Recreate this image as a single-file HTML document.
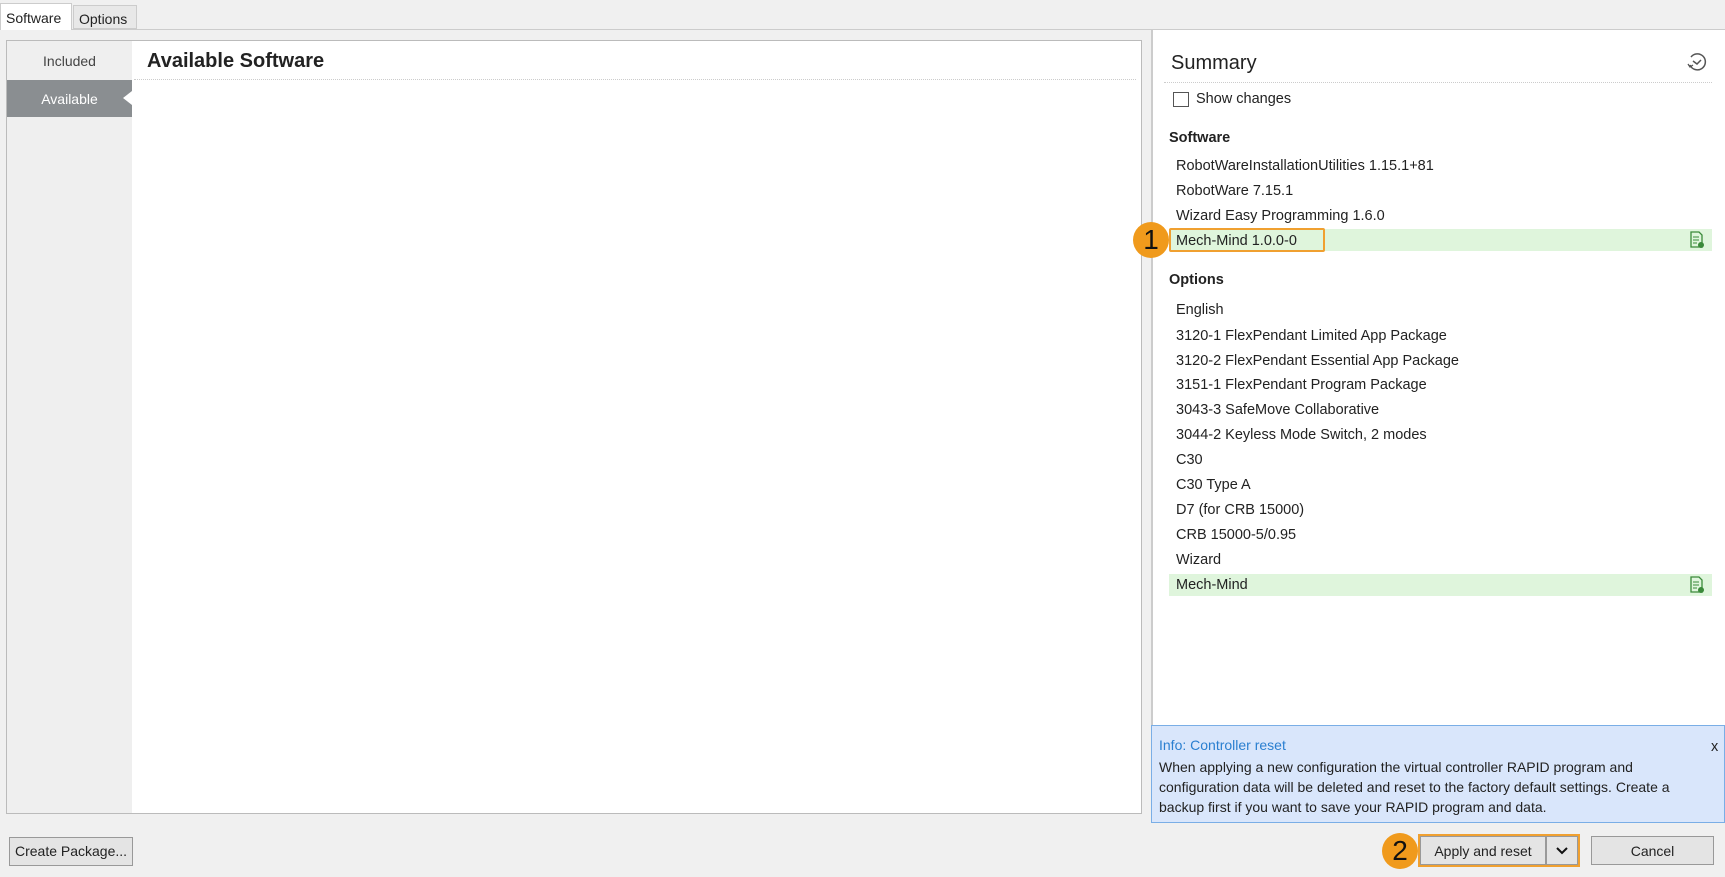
<!DOCTYPE html>
<html><head><meta charset="utf-8"><style>
*{margin:0;padding:0;box-sizing:border-box}
body{width:1725px;height:877px;background:#f0f0f0;font-family:"Liberation Sans",sans-serif;color:#222;position:relative;overflow:hidden}
.a{position:absolute}
.t{font-size:14.5px;white-space:nowrap}
</style></head><body>
<div class="a" style="left:0;top:29px;width:1725px;height:1px;background:#ccc"></div>
<div class="a t" style="left:0;top:3px;width:72px;height:27px;background:#fff;border:1px solid #ccc;border-bottom:none;padding:6px 0 0 5px;font-size:14px">Software</div>
<div class="a t" style="left:73px;top:5px;width:64px;height:24px;background:#e8e8e8;border:1px solid #ccc;padding:5px 0 0 5px;font-size:14px">Options</div>

<div class="a" style="left:6px;top:40px;width:1136px;height:774px;background:#fff;border:1px solid #bbb"></div>
<div class="a" style="left:7px;top:41px;width:125px;height:772px;background:#efefef"></div>
<div class="a t" style="left:7px;top:53px;width:125px;text-align:center;color:#444;font-size:14px">Included</div>
<div class="a" style="left:7px;top:80px;width:125px;height:37px;background:#8a8e91"></div>
<div class="a t" style="left:7px;top:91px;width:125px;text-align:center;color:#fff;font-size:14px">Available</div>
<div class="a" style="left:123px;top:91px;width:0;height:0;border-top:7px solid transparent;border-bottom:7px solid transparent;border-right:9px solid #fff"></div>
<div class="a" style="left:147px;top:50px;font-size:20px;font-weight:bold;color:#222">Available Software</div>
<div class="a" style="left:134px;top:79px;width:1002px;border-top:1px dotted #ccc"></div>

<div class="a" style="left:1151px;top:30px;width:574px;height:695px;background:#fff;border-left:2px solid #ccc"></div>
<div class="a" style="left:1171px;top:52px;font-size:20px;color:#222">Summary</div>
<svg class="a" style="left:1686px;top:51px" width="22" height="22" viewBox="0 0 22 22"><path d="M5 6A8 8 0 1 1 4 14" fill="none" stroke="#555" stroke-width="1.5"/><path d="M7 10l4 3 4-4" fill="none" stroke="#555" stroke-width="1.5"/><path d="M2 13l2 3 3-2" fill="none" stroke="#555" stroke-width="1.3"/></svg>
<div class="a" style="left:1164px;top:82px;width:548px;border-top:1px dotted #ccc"></div>
<div class="a" style="left:1173px;top:92px;width:16px;height:15px;border:1px solid #555;background:#fff"></div>
<div class="a t" style="left:1196px;top:91px">Show changes</div>
<div class="a t" style="left:1169px;top:130px;font-weight:bold">Software</div>
<div class="a t" style="left:1176px;top:158px">RobotWareInstallationUtilities 1.15.1+81</div>
<div class="a t" style="left:1176px;top:183px">RobotWare 7.15.1</div>
<div class="a t" style="left:1176px;top:208px">Wizard Easy Programming 1.6.0</div>
<div class="a" style="left:1169px;top:229px;width:543px;height:22px;background:#dff5dc"></div>
<div class="a" style="left:1169px;top:228px;width:156px;height:24px;border:2px solid #f0a030;border-radius:2px"></div>
<div class="a t" style="left:1176px;top:233px">Mech-Mind 1.0.0-0</div>
<svg class="a" style="left:1689px;top:231px" width="16" height="18" viewBox="0 0 16 18"><path d="M2 1h8l3 3v12H2z" fill="none" stroke="#3a8a3a" stroke-width="1.3"/><path d="M4 6h6M4 9h6M4 12h4" stroke="#3a8a3a"/><circle cx="12" cy="14" r="3" fill="#3a8a3a"/></svg>
<div class="a" style="left:1133px;top:222px;width:36px;height:36px;border-radius:50%;background:#f09a1c;font-size:28px;text-align:center;line-height:36px;color:#111">1</div>
<div class="a t" style="left:1169px;top:272px;font-weight:bold">Options</div>
<div class="a t" style="left:1176px;top:302px">English</div>
<div class="a t" style="left:1176px;top:328px">3120-1 FlexPendant Limited App Package</div>
<div class="a t" style="left:1176px;top:353px">3120-2 FlexPendant Essential App Package</div>
<div class="a t" style="left:1176px;top:377px">3151-1 FlexPendant Program Package</div>
<div class="a t" style="left:1176px;top:402px">3043-3 SafeMove Collaborative</div>
<div class="a t" style="left:1176px;top:427px">3044-2 Keyless Mode Switch, 2 modes</div>
<div class="a t" style="left:1176px;top:452px">C30</div>
<div class="a t" style="left:1176px;top:477px">C30 Type A</div>
<div class="a t" style="left:1176px;top:502px">D7 (for CRB 15000)</div>
<div class="a t" style="left:1176px;top:527px">CRB 15000-5/0.95</div>
<div class="a t" style="left:1176px;top:552px">Wizard</div>
<div class="a" style="left:1169px;top:574px;width:543px;height:22px;background:#dff5dc"></div>
<div class="a t" style="left:1176px;top:577px">Mech-Mind</div>
<svg class="a" style="left:1689px;top:576px" width="16" height="18" viewBox="0 0 16 18"><path d="M2 1h8l3 3v12H2z" fill="none" stroke="#3a8a3a" stroke-width="1.3"/><path d="M4 6h6M4 9h6M4 12h4" stroke="#3a8a3a"/><circle cx="12" cy="14" r="3" fill="#3a8a3a"/></svg>

<div class="a" style="left:1151px;top:725px;width:574px;height:98px;background:#d9e6fb;border:1px solid #7aaee6"></div>
<div class="a t" style="left:1159px;top:737px;color:#2a7fd0;font-size:14px">Info: Controller reset</div>
<div class="a t" style="left:1711px;top:739px">x</div>
<div class="a" style="left:1159px;top:757px;font-size:14px;line-height:20px;width:555px">When applying a new configuration the virtual controller RAPID program and<br>configuration data will be deleted and reset to the factory default settings. Create a<br>backup first if you want to save your RAPID program and data.</div>

<div class="a t" style="left:9px;top:837px;width:124px;height:29px;border:1px solid #999;background:#e4e4e4;text-align:center;line-height:27px;font-size:14px">Create Package...</div>
<div class="a" style="left:1418px;top:834px;width:162px;height:33px;border:2px solid #f0a030"></div>
<div class="a t" style="left:1420px;top:836px;width:126px;height:29px;border:1px solid #999;background:#e4e4e4;text-align:center;line-height:29px;font-size:14px">Apply and reset</div>
<div class="a" style="left:1546px;top:836px;width:32px;height:29px;border:1px solid #999;background:#e4e4e4"></div>
<svg class="a" style="left:1555px;top:846px" width="14" height="10"><path d="M2 2l5 5 5-5" fill="none" stroke="#111" stroke-width="2"/></svg>
<div class="a" style="left:1382px;top:833px;width:36px;height:36px;border-radius:50%;background:#f09a1c;font-size:28px;text-align:center;line-height:36px;color:#111">2</div>
<div class="a t" style="left:1591px;top:836px;width:123px;height:29px;border:1px solid #999;background:#e4e4e4;text-align:center;line-height:29px;font-size:14px">Cancel</div>
</body></html>
